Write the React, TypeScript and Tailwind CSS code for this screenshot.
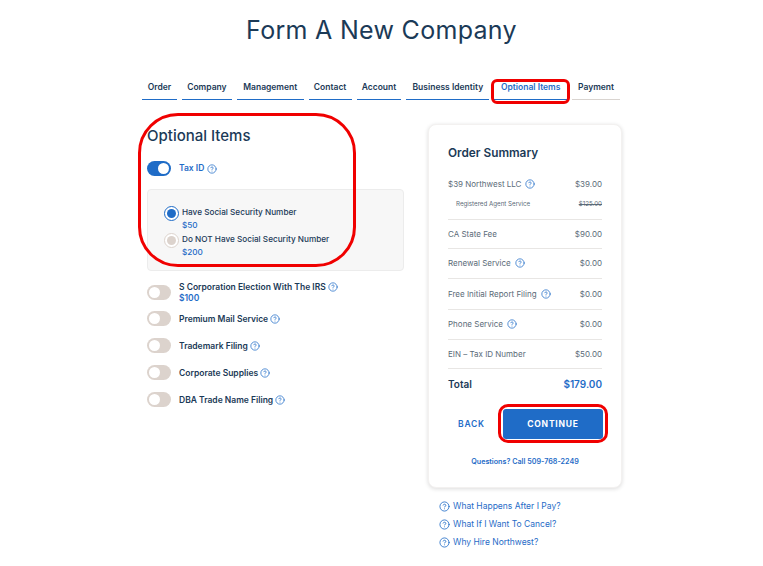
import { CircleHelp } from 'lucide-react';

const font = { fontFamily: 'Inter, "Open Sans", sans-serif' };

const tabs = [
  { label: 'Order', width: 'w-[35px]' },
  { label: 'Company', width: 'w-[50px]' },
  { label: 'Management', width: 'w-[67px]' },
  { label: 'Contact', width: 'w-[43px]' },
  { label: 'Account', width: 'w-[45px]' },
  { label: 'Business Identity', width: 'w-[83px]' },
  { label: 'Optional Items', width: 'w-[73px]', active: true },
  { label: 'Payment', width: 'w-[48px]', upcoming: true },
];

const options = [
  { label: 'S Corporation Election With The IRS', price: '$100' },
  { label: 'Premium Mail Service' },
  { label: 'Trademark Filing' },
  { label: 'Corporate Supplies' },
  { label: 'DBA Trade Name Filing' },
];

const fees = [
  { label: 'CA State Fee', amount: '$90.00', height: 'h-[29px]' },
  { label: 'Renewal Service', amount: '$0.00', height: 'h-[30px]', help: true },
  { label: 'Free Initial Report Filing', amount: '$0.00', height: 'h-[31px]', help: true },
  { label: 'Phone Service', amount: '$0.00', height: 'h-[30px]', help: true },
  { label: 'EIN – Tax ID Number', amount: '$50.00', height: 'h-[29px]' },
];

const links = ['What Happens After I Pay?', 'What If I Want To Cancel?', 'Why Hire Northwest?'];

function Help({ size = 10 }: { size?: number }) {
  return <CircleHelp size={size} strokeWidth={1.8} className="shrink-0 text-[#1f6cc7]" />;
}

function Toggle({ on = false, offset = false }: { on?: boolean; offset?: boolean }) {
  return (
    <div className={`flex h-[15px] w-6 shrink-0 items-center rounded-full px-[2px] ${on ? 'justify-end bg-[#1f6cc7]' : 'justify-start bg-[#dcd3cd]'} ${offset ? 'mt-[6px] -mb-[1px]' : ''}`}>
      <div className="h-[11px] w-[11px] rounded-full bg-white" />
    </div>
  );
}

function Radio({ on = false }: { on?: boolean }) {
  return (
    <div className={`flex h-[15px] w-[15px] shrink-0 items-center justify-center rounded-full border bg-white ${on ? 'border-[#1f6cc7]' : 'border-[#dcd3cd]'}`}>
      <div className={`h-[9px] w-[9px] rounded-full ${on ? 'bg-[#1f6cc7]' : 'bg-[#dcd3cd]'}`} />
    </div>
  );
}

export default function App() {
  return (
    <div style={font} className="relative h-[566px] w-[763px] overflow-hidden bg-white text-[#1b3a57]">
      <h1 className="pt-[14px] text-center text-[25px] leading-[32px] font-normal tracking-[0.3px]">Form A New Company</h1>

      <div className="mt-[28px] ml-[142px] flex w-[478px] gap-[5px]">
        {tabs.map((tab) => (
          <div
            key={tab.label}
            className={`flex h-[26px] items-center justify-center whitespace-nowrap border-b pt-[1px] text-[8.5px] font-semibold ${tab.width} ${tab.upcoming ? 'border-[#d9d4d0]' : 'border-[#1f6cc7]'} ${tab.active ? 'text-[#1f6cc7]' : ''}`}
          >
            {tab.label}
          </div>
        ))}
      </div>

      <div className="mt-[23px] ml-[147px] flex items-start">
        <div className="w-[257px] pt-[3px]">
          <h2 className="text-[15px] leading-[20px] font-medium">Optional Items</h2>
          <div className="mt-[15px] flex h-[15px] items-center gap-2">
            <Toggle on />
            <div className="flex items-center gap-[3px]">
              <span className="text-[8.5px] font-semibold text-[#1f6cc7]">Tax ID</span>
              <Help />
            </div>
          </div>
          <div className="mt-[13px] h-[82px] rounded-sm border border-[#ececec] bg-[#f7f7f7] pt-[16px] pl-[16px]">
            <div className="flex gap-[3px]">
              <Radio on />
              <div className="text-[8.2px] leading-[13px] font-medium">
                <div>Have Social Security Number</div>
                <div className="text-[#1f6cc7]">$50</div>
              </div>
            </div>
            <div className="mt-[1px] flex gap-[3px]">
              <Radio />
              <div className="text-[8.2px] leading-[13px] font-medium">
                <div>Do NOT Have Social Security Number</div>
                <div className="text-[#1f6cc7]">$200</div>
              </div>
            </div>
          </div>
          <div className="mt-[8px] flex flex-col gap-[12px]">
            {options.map((option) => (
              <div key={option.label} className="flex items-start gap-2">
                <Toggle offset={!!option.price} />
                <div className="text-[8.5px] leading-[12px] font-semibold">
                  <div className="flex h-[15px] items-center gap-[2px]">
                    <span>{option.label}</span>
                    <Help />
                  </div>
                  {option.price && <div className="-mt-[2px] h-[7px] text-[#1f6cc7]">{option.price}</div>}
                </div>
              </div>
            ))}
          </div>
        </div>

        <div className="ml-[24px] w-[194px] pt-[1px]">
          <div className="h-[364px] rounded-lg border border-[#f3f1f0] bg-white px-[19px] pt-[21px] shadow-[0_1px_4px_rgba(0,0,0,0.14)]">
            <h3 className="text-[11.8px] leading-[15px] font-semibold">Order Summary</h3>
            <div className="border-b border-[#e8e6e4] pt-[15px] pb-[9px] text-[#5b6b78]">
              <div className="flex h-[15px] items-center justify-between text-[8px]">
                <span className="flex items-center gap-[4px]">$39 Northwest LLC <Help /></span>
                <span>$39.00</span>
              </div>
              <div className="mt-[7px] flex h-[12px] items-center justify-between pl-2 text-[6.2px]">
                <span>Registered Agent Service</span>
                <span className="line-through">$125.00</span>
              </div>
            </div>
            {fees.map((fee) => (
              <div key={fee.label} className={`flex items-center justify-between border-b border-[#e8e6e4] pb-[1px] text-[8px] text-[#5b6b78] ${fee.height}`}>
                <span className="flex items-center gap-[4px]">{fee.label} {fee.help && <Help />}</span>
                <span>{fee.amount}</span>
              </div>
            ))}
            <div className="flex h-[30px] items-center justify-between text-[10px] font-semibold">
              <span>Total</span>
              <span className="text-[#1f6cc7]">$179.00</span>
            </div>
            <div className="mt-[10px] -mr-[1px] flex items-center justify-between">
              <button className="pl-[10px] text-[8.5px] font-semibold tracking-[0.8px] text-[#1f6cc7]">BACK</button>
              <button className="h-[30px] w-[100px] rounded-[3px] bg-[#1f6cc7] text-[8.5px] font-bold tracking-[0.8px] text-white">CONTINUE</button>
            </div>
            <div className="mt-[18px] text-center text-[7.2px] font-semibold text-[#1f6cc7]">Questions? Call 509-768-2249</div>
          </div>
          <div className="mt-[13px] flex flex-col gap-[8px] pl-[11px]">
            {links.map((link) => (
              <div key={link} className="flex h-[10px] items-center gap-[3px] text-[8.5px] text-[#1f6cc7]">
                <Help size={11} />
                {link}
              </div>
            ))}
          </div>
        </div>
      </div>

      {/* red review marks drawn over the page */}
      <div className="absolute top-[79px] left-[491px] h-[25px] w-[79px] rounded-[6px] border-[3px] border-[#f00000]" />
      <div className="absolute top-[113px] left-[138px] h-[154px] w-[218px] rounded-[40px] border-[3px] border-[#f00000]" />
      <div className="absolute top-[404px] left-[498px] h-[39px] w-[110px] rounded-[10px] border-[3px] border-[#f00000]" />
    </div>
  );
}
